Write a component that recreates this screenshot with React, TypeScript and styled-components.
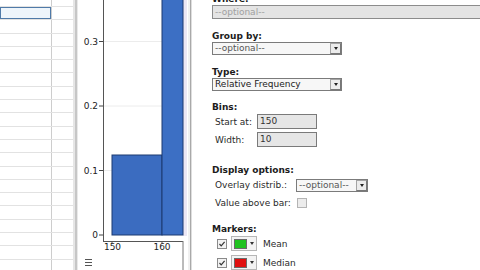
import React from "react";
import styled, { createGlobalStyle } from "styled-components";

const Global = createGlobalStyle`
  html, body { margin: 0; padding: 0; width: 480px; height: 270px; overflow: hidden; background: #fff; }
  #root { width: 480px; height: 270px; }
`;

const Screen = styled.div`
  display: flex;
  width: 480px;
  height: 270px;
  overflow: hidden;
  background: #fff;
  font-family: "DejaVu Sans", Verdana, sans-serif;
`;

const Sheet = styled.div`
  width: 73px;
  flex: none;
  display: flex;
  flex-direction: column;
  background: #fff;
`;

const SheetRow = styled.div<{ $h: number }>`
  height: ${(p) => p.$h}px;
  flex: none;
  display: grid;
  grid-template-columns: 52px 21px;
  box-sizing: border-box;
  border-bottom: 1px solid #e2e2e2;
`;

const Cell = styled.div<{ $sel?: boolean; $last?: boolean }>`
  box-sizing: border-box;
  border-right: ${(p) => (p.$last ? "none" : "1px solid #cdcdcd")};
  background: ${(p) => (p.$sel ? "#eef5fb" : "transparent")};
  box-shadow: ${(p) => (p.$sel ? "inset 0 0 0 1px #4f7aa8" : "none")};
`;

const Gutter = styled.div`
  width: 5px;
  flex: none;
  background: linear-gradient(to right, #e6e6e6 0 2px, #c6c6c6 2px 4px, #e9e9e9 4px 5px);
`;

const ChartPanel = styled.div`
  width: 110px;
  flex: none;
  background: #fff;
  display: flex;
`;

const Separator = styled.div`
  width: 4px;
  flex: none;
  background: linear-gradient(to right, #f0f0f0 0 2px, #a9a9a9 2px 3px, #dedede 3px 4px);
`;

const Form = styled.div`
  flex: 1;
  min-width: 0;
  padding-left: 20px;
  margin-top: -6px;
  display: flex;
  flex-direction: column;
  color: #1c1c1c;
  font-size: 9px;
`;

const SectionLabel = styled.div<{ $mt: number }>`
  font-weight: bold;
  line-height: 11px;
  height: 11px;
  margin-top: ${(p) => p.$mt}px;
  white-space: nowrap;
`;

const TextBox = styled.div`
  height: 14px;
  box-sizing: border-box;
  margin-right: -12px;
  border: 1px solid #8c8c8c;
  background: #e4e4e4;
  color: #a0a0a0;
  line-height: 12px;
  padding-left: 2px;
`;

const Select = styled.div<{ $w: number; $mt?: number }>`
  width: ${(p) => p.$w}px;
  height: 13px;
  box-sizing: border-box;
  margin-top: ${(p) => p.$mt ?? 0}px;
  border: 1px solid #7b7b7b;
  background: #f7f7f7;
  display: flex;
  flex: none;
  line-height: 11px;
`;

const SelectText = styled.span<{ $muted?: boolean }>`
  flex: 1;
  padding-left: 2px;
  color: ${(p) => (p.$muted ? "#555" : "#222")};
  white-space: nowrap;
  overflow: hidden;
`;

const ArrowButton = styled.span`
  width: 11px;
  flex: none;
  box-sizing: border-box;
  border: 1px solid #a4a4a4;
  border-right-color: #777;
  border-bottom-color: #777;
  background: #ececec;
  display: flex;
  align-items: center;
  justify-content: center;
  &::after {
    content: "";
    border-left: 2.5px solid transparent;
    border-right: 2.5px solid transparent;
    border-top: 3px solid #222;
  }
`;

const FieldRow = styled.div<{ $mt: number; $h: number; $indent?: number }>`
  display: flex;
  align-items: center;
  height: ${(p) => p.$h}px;
  margin-top: ${(p) => p.$mt}px;
  padding-left: ${(p) => p.$indent ?? 3}px;
  white-space: nowrap;
`;

const FieldLabel = styled.span<{ $w: number }>`
  width: ${(p) => p.$w}px;
  flex: none;
  color: #2a2a2a;
`;

const NumberBox = styled.div`
  width: 60px;
  height: 15px;
  box-sizing: border-box;
  border: 1px solid #7a7a7a;
  background: #e6e6e6;
  color: #333;
  line-height: 13px;
  padding-left: 2px;
`;

const Check = styled.span<{ $on?: boolean }>`
  width: 10px;
  height: 10px;
  box-sizing: border-box;
  flex: none;
  border: 1px solid ${(p) => (p.$on ? "#8a8a8a" : "#b4b4b4")};
  background: ${(p) => (p.$on ? "#f2f2f2" : "#ececec")};
  display: flex;
  align-items: center;
  justify-content: center;
`;

const ColorButton = styled.span`
  width: 26px;
  height: 15px;
  margin-left: 4px;
  box-sizing: border-box;
  border: 1px solid #b6b6b6;
  background: #f3f3f3;
  display: flex;
  align-items: center;
  padding-left: 2px;
  gap: 3px;
  flex: none;
`;

const Swatch = styled.span<{ $c: string }>`
  width: 13px;
  height: 10px;
  box-sizing: border-box;
  border: 1px solid #6a6a6a;
  background: ${(p) => p.$c};
`;

const Caret = styled.span`
  border-left: 2px solid transparent;
  border-right: 2px solid transparent;
  border-top: 3px solid #333;
`;

const MarkerName = styled.span`
  margin-left: 6px;
  color: #2a2a2a;
`;

const CheckMark = () => (
  <svg width="8" height="8" viewBox="0 0 8 8">
    <path d="M1.5 4 L3.2 5.8 L6.6 1.8" fill="none" stroke="#333" strokeWidth="1.2" />
  </svg>
);

const yTicks = [
  { y: 235, t: "0" },
  { y: 170.5, t: "0.1" },
  { y: 106, t: "0.2" },
  { y: 41.5, t: "0.3" },
];

const Histogram = () => (
  <svg width="110" height="270" viewBox="0 0 110 270">
    <rect x="105" y="0" width="4" height="236" fill="#ece7f5" />
    {yTicks.map((k) => (
      <g key={k.t}>
        {k.t !== "0" && <line x1="25" y1={k.y} x2="105" y2={k.y} stroke="#ececec" strokeWidth="1" />}
        <line x1="21" y1={k.y} x2="25" y2={k.y} stroke="#444" strokeWidth="1" />
        <text x="20" y={k.y + 3} textAnchor="end" fontSize="9" fill="#222" fontFamily="DejaVu Sans, sans-serif">
          {k.t}
        </text>
      </g>
    ))}
    <rect x="34" y="155" width="50" height="80" fill="#3b6cc0" stroke="#1d3b70" strokeWidth="1" />
    <rect x="84" y="-5" width="21" height="240" fill="#3c6fc4" stroke="#1d3b70" strokeWidth="1" />
    <line x1="25.5" y1="0" x2="25.5" y2="241.5" stroke="#555" strokeWidth="1" />
    <line x1="25" y1="241.5" x2="105" y2="241.5" stroke="#555" strokeWidth="1" />
    <line x1="105" y1="241" x2="105" y2="270" stroke="#777" strokeWidth="1" />
    <line x1="34" y1="241" x2="34" y2="243.5" stroke="#555" strokeWidth="1" />
    <line x1="84" y1="241" x2="84" y2="243.5" stroke="#555" strokeWidth="1" />
    <text x="34.5" y="250" textAnchor="middle" fontSize="9" fill="#222" fontFamily="DejaVu Sans, sans-serif">150</text>
    <text x="84" y="250" textAnchor="middle" fontSize="9" fill="#222" fontFamily="DejaVu Sans, sans-serif">160</text>
    <g stroke="#555" strokeWidth="1">
      <line x1="7" y1="259.5" x2="14" y2="259.5" />
      <line x1="7" y1="262.5" x2="14" y2="262.5" />
      <line x1="7" y1="265.5" x2="14" y2="265.5" />
    </g>
  </svg>
);

const rowHeights = [7, ...Array.from({ length: 20 }, () => 13.3)];

export default function App() {
  return (
    <>
      <Global />
      <Screen>
        <Sheet>
          {rowHeights.map((h, i) => (
            <SheetRow key={i} $h={h}>
              <Cell $sel={i === 1} />
              <Cell $last />
            </SheetRow>
          ))}
        </Sheet>
        <Gutter />
        <ChartPanel>
          <Histogram />
        </ChartPanel>
        <Separator />
        <Form>
          <SectionLabel $mt={0}>Where:</SectionLabel>
          <TextBox>--optional--</TextBox>

          <SectionLabel $mt={12}>Group by:</SectionLabel>
          <Select $w={130}>
            <SelectText $muted>--optional--</SelectText>
            <ArrowButton />
          </Select>

          <SectionLabel $mt={12}>Type:</SectionLabel>
          <Select $w={130}>
            <SelectText>Relative Frequency</SelectText>
            <ArrowButton />
          </Select>

          <SectionLabel $mt={11}>Bins:</SectionLabel>
          <FieldRow $mt={1} $h={15}>
            <FieldLabel $w={42}>Start at:</FieldLabel>
            <NumberBox>150</NumberBox>
          </FieldRow>
          <FieldRow $mt={3} $h={15}>
            <FieldLabel $w={42}>Width:</FieldLabel>
            <NumberBox>10</NumberBox>
          </FieldRow>

          <SectionLabel $mt={18}>Display options:</SectionLabel>
          <FieldRow $mt={2} $h={14}>
            <FieldLabel $w={81}>Overlay distrib.:</FieldLabel>
            <Select $w={72}>
              <SelectText $muted>--optional--</SelectText>
              <ArrowButton />
            </Select>
          </FieldRow>
          <FieldRow $mt={5} $h={12}>
            <FieldLabel $w={82}>Value above bar:</FieldLabel>
            <Check />
          </FieldRow>

          <SectionLabel $mt={15}>Markers:</SectionLabel>
          <FieldRow $mt={1} $h={15} $indent={5}>
            <Check $on>
              <CheckMark />
            </Check>
            <ColorButton>
              <Swatch $c="#1fc21f" />
              <Caret />
            </ColorButton>
            <MarkerName>Mean</MarkerName>
          </FieldRow>
          <FieldRow $mt={4} $h={15} $indent={5}>
            <Check $on>
              <CheckMark />
            </Check>
            <ColorButton>
              <Swatch $c="#e01010" />
              <Caret />
            </ColorButton>
            <MarkerName>Median</MarkerName>
          </FieldRow>
        </Form>
      </Screen>
    </>
  );
}
